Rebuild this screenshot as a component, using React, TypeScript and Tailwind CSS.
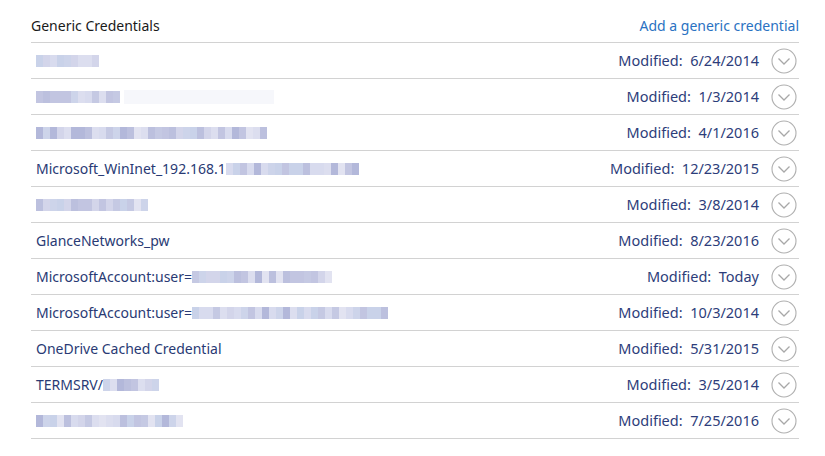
import React from "react";

const palette = ["#d3d5ea", "#c5c9e3", "#dcdeef", "#bcc0de", "#e2e3f1", "#cdd4ea", "#b3b8da", "#d8dbee", "#c9d2e9", "#c2c5e1"];

function Mosaic({ width, seed }: { width: number; seed: number }) {
  const n = Math.ceil(width / 7);
  const cells = [];
  let s = seed;
  for (let i = 0; i < n; i++) {
    s = (s * 9301 + 49297) % 233280;
    const c = palette[Math.floor(s / 7) % palette.length];
    cells.push(<span key={i} className="inline-block h-[12px] w-[7px]" style={{ background: c }} />);
  }
  return <span className="inline-flex align-middle">{cells}</span>;
}

type Row = { pre?: string; blur?: number; ghost?: number; date: string };

const rows: Row[] = [
  { blur: 60, date: "6/24/2014" },
  { blur: 78, ghost: 150, date: "1/3/2014" },
  { blur: 228, date: "4/1/2016" },
  { pre: "Microsoft_WinInet_192.168.1", blur: 128, date: "12/23/2015" },
  { blur: 108, date: "3/8/2014" },
  { pre: "GlanceNetworks_pw", date: "8/23/2016" },
  { pre: "MicrosoftAccount:user=", blur: 140, date: "Today" },
  { pre: "MicrosoftAccount:user=", blur: 190, date: "10/3/2014" },
  { pre: "OneDrive Cached Credential", date: "5/31/2015" },
  { pre: "TERMSRV/", blur: 54, date: "3/5/2014" },
  { blur: 144, date: "7/25/2016" },
];

function Chevron() {
  return (
    <svg width="26" height="26" viewBox="0 0 26 26">
      <circle cx="13" cy="13" r="12" fill="none" stroke="#b0b0b0" strokeWidth="1.1" />
      <path d="M7.5 10.5 L13 16 L18.5 10.5" fill="none" stroke="#a8a8a8" strokeWidth="1.3" />
    </svg>
  );
}

export default function App() {
  return (
    <div className="h-[456px] w-[825px] bg-white" style={{ fontFamily: '"Noto Sans", "Open Sans", sans-serif' }}>
      <div className="ml-[31px] w-[768px]">
        <div className="flex h-[43px] items-end justify-between border-b border-[#d2d2d2] pb-[6px]">
          <span className="text-[14px] leading-[20px] text-[#1a1a1a]">Generic Credentials</span>
          <span className="text-[14px] leading-[20px] text-[#2a72c2]">Add a generic credential</span>
        </div>
        {rows.map((r, i) => (
          <div key={i} className="flex h-[36px] items-center border-b border-[#d2d2d2] pl-[5px] pr-[2px]">
            <div className="flex flex-1 items-center text-[14px] text-[#293a74]">
              {r.pre && <span className="whitespace-pre">{r.pre}</span>}
              {r.blur && <Mosaic width={r.blur} seed={i * 37 + 11} />}
              {r.ghost && <span className="ml-1 inline-block h-[14px] bg-[#f6f7fb]" style={{ width: r.ghost }} />}
            </div>
            <span className="whitespace-pre text-[14.5px] text-[#2d3d7a]">{"Modified:  " + r.date}</span>
            <span className="ml-[12px] flex">
              <Chevron />
            </span>
          </div>
        ))}
      </div>
    </div>
  );
}
